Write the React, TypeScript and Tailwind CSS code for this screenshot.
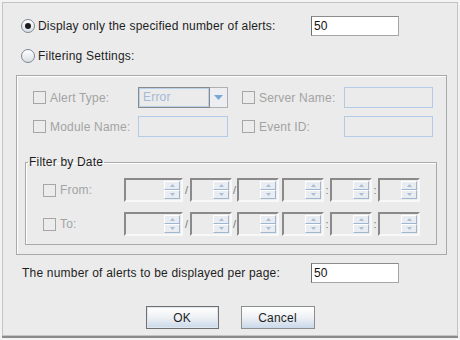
import React from "react";

function Radio({ checked }: { checked?: boolean }) {
  return (
    <span className="w-[14px] h-[14px] rounded-full border border-[#7d8792] bg-gradient-to-b from-white to-[#d9dee5] flex items-center justify-center shrink-0">
      {checked && <span className="w-[6px] h-[6px] rounded-full bg-[#1c1c1c]" />}
    </span>
  );
}

function Check() {
  return <span className="w-[13px] h-[13px] border border-[#a6a6a6] bg-[#ececec] shrink-0" />;
}

function Arrow({ up }: { up?: boolean }) {
  return (
    <svg width="5" height="3" viewBox="0 0 5 3">
      {up ? <polygon points="2.5,0 5,3 0,3" fill="#a9bdd6" /> : <polygon points="0,0 5,0 2.5,3" fill="#a9bdd6" />}
    </svg>
  );
}

function SpinBtns() {
  return (
    <div className="ml-auto flex flex-col w-[16px] h-full">
      <div className="flex-1 flex items-center justify-center bg-[#e9edf2] border-r border-b border-[#9fb6d1] border-l border-l-white border-t border-t-white">
        <Arrow up />
      </div>
      <div className="flex-1 flex items-center justify-center bg-[#e9edf2] border-r border-b border-[#9fb6d1] border-l border-l-white border-t border-t-white">
        <Arrow />
      </div>
    </div>
  );
}

function Spinner({ wide }: { wide?: boolean }) {
  return (
    <div
      className={
        (wide ? "w-[59px]" : "w-[42px]") +
        " h-[24px] flex border-2 border-t-[#8a8a8a] border-l-[#8a8a8a] border-r-[#f8f8f8] border-b-[#f8f8f8] bg-[#ebebeb] p-[1px]"
      }
    >
      <SpinBtns />
    </div>
  );
}

function Sep({ ch, w }: { ch: string; w: string }) {
  return <span className={w + " text-center text-[11px] leading-[24px] text-[#777] tracking-normal"}>{ch}</span>;
}

function DateRow({ label }: { label: string }) {
  return (
    <div className="flex items-center h-[24px]">
      <div className="w-[81px] flex items-center gap-[4px]">
        <Check />
        <span className="text-[#a3a3a3]">{label}</span>
      </div>
      <Spinner wide />
      <Sep ch="/" w="w-[7px]" />
      <Spinner />
      <Sep ch="/" w="w-[5px]" />
      <Spinner />
      <span className="w-[3px]" />
      <Spinner />
      <Sep ch=":" w="w-[6px]" />
      <Spinner />
      <Sep ch=":" w="w-[6px]" />
      <Spinner />
    </div>
  );
}

function Field({ value }: { value: string }) {
  return (
    <div className="w-[88px] h-[20px] bg-white border border-[#a6a6a6] border-l-[#6e6e6e] border-t-[#8c8c8c] pl-[2px] leading-[18px] text-[#111]">
      {value}
    </div>
  );
}

function DisField({ w }: { w: string }) {
  return <div className={w + " h-[21px] border border-[#b3cbe6] bg-[#ebebeb]"} />;
}

export default function App() {
  return (
    <div className="w-[460px] h-[340px] bg-[#f3f3f3] pt-[2px] pl-[2px] font-['Liberation_Sans',Arial,sans-serif] text-[12px] tracking-[0.2px] text-[#1e1e1e]">
      <div className="w-[456px] h-[334px] border border-[#c3c3c3] bg-[#ebebeb] flex flex-col">
        {/* Row 1 */}
        <div className="flex items-center h-[20px] mt-[13px] pl-[18px]">
          <div className="w-[290px] flex items-center gap-[3px]">
            <Radio checked />
            <span>Display only the specified number of alerts:</span>
          </div>
          <Field value="50" />
        </div>
        {/* Row 2 */}
        <div className="flex items-center h-[20px] mt-[10px] pl-[18px]">
          <div className="flex items-center gap-[3px]">
            <Radio />
            <span>Filtering Settings:</span>
          </div>
        </div>
        {/* Group */}
        <div className="ml-[13px] mt-[9px] w-[431px] h-[180px] border border-[#a9a9a9] shadow-[inset_1px_1px_0_#ffffff] flex flex-col">
          <div className="flex items-center h-[21px] mt-[11px] pl-[16px]">
            <div className="w-[105px] flex items-center gap-[4px]">
              <Check />
              <span className="text-[#a3a3a3]">Alert Type:</span>
            </div>
            <div className="flex h-[21px] w-[90px]">
              <div className="w-[72px] h-full border border-[#8a8a8a] shadow-[inset_0_0_0_1px_#b9d0ea] bg-[#ebebeb] pl-[4px] leading-[19px] text-[#a3b9d6]">
                Error
              </div>
              <div className="w-[18px] h-full border-y border-r border-[#b0b0b0] bg-[#eceef1] flex items-center justify-center">
                <svg width="9" height="5" viewBox="0 0 9 5">
                  <polygon points="0,0 9,0 4.5,5" fill="#7aa6d6" />
                </svg>
              </div>
            </div>
            <div className="ml-[14px] w-[102px] flex items-center gap-[4px]">
              <Check />
              <span className="text-[#a3a3a3]">Server Name:</span>
            </div>
            <DisField w="w-[89px]" />
          </div>
          <div className="flex items-center h-[21px] mt-[8px] pl-[16px]">
            <div className="w-[105px] flex items-center gap-[4px]">
              <Check />
              <span className="text-[#a3a3a3]">Module Name:</span>
            </div>
            <DisField w="w-[90px]" />
            <div className="ml-[14px] w-[102px] flex items-center gap-[4px]">
              <Check />
              <span className="text-[#a3a3a3]">Event ID:</span>
            </div>
            <DisField w="w-[89px]" />
          </div>
          <fieldset className="ml-[8px] mt-[18px] w-[412px] h-[90px] border border-[#a9a9a9] shadow-[inset_1px_1px_0_#ffffff]">
            <legend className="ml-[2px] px-[1px] leading-[14px] text-[#1e1e1e]">Filter by Date</legend>
            <div className="pl-[17px] pt-[9px] flex flex-col gap-[10px]">
              <DateRow label="From:" />
              <DateRow label="To:" />
            </div>
          </fieldset>
        </div>
        {/* Per page */}
        <div className="flex items-center h-[20px] mt-[8px] pl-[19px]">
          <span className="w-[289px]">The number of alerts to be displayed per page:</span>
          <Field value="50" />
        </div>
        {/* Buttons */}
        <div className="flex justify-center gap-[22px] mt-[23px]">
          <button className="w-[73px] h-[23px] border border-[#6f6f6f] shadow-[inset_0_0_0_1px_#dfe6ee] bg-gradient-to-b from-white via-[#eef1f5] to-[#c9d8ea] text-[#1e1e1e]">
            OK
          </button>
          <button className="w-[74px] h-[23px] border border-[#8e8e8e] bg-gradient-to-b from-white via-[#eef1f5] to-[#c9d8ea] text-[#1e1e1e]">
            Cancel
          </button>
        </div>
      </div>
      <div className="w-[456px] h-[2px] bg-[#8a8a8a]" />
    </div>
  );
}
